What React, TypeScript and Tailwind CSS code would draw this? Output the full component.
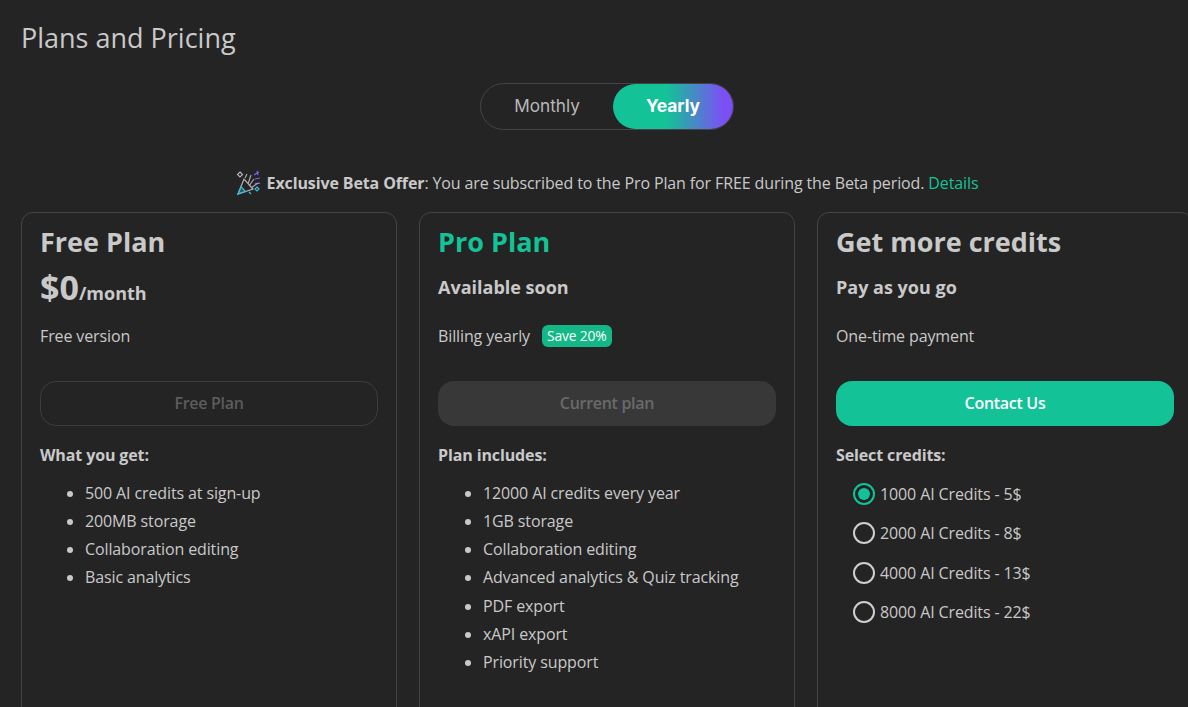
import React from 'react';

const font = { fontFamily: '"Open Sans", sans-serif' };

const ConfettiIcon = () => (
  <svg width="26" height="26" viewBox="0 0 26 26" fill="none" strokeWidth="1.2">
    <path d="M2 24 L8 9 L17 19 Z" stroke="#b4b4b4" />
    <path d="M2 24 L5 16.5 L9.5 21.5 Z" stroke="#38bdd8" fill="#38bdd8" fillOpacity="0.35" />
    <path d="M9 8 L11 4 M12 14 L15 5 M13 16 L18 9 M15 18 L22 13" stroke="#a8a8a8" />
    <path d="M4 2 L6.5 4.5 L4 7 L1.5 4.5 Z" stroke="#b4b4b4" />
    <path d="M18 5 L23 2 M19 9 L24 8" stroke="#8b5cf6" />
    <path d="M21 1 L22 5" stroke="#8b5cf6" />
    <path d="M21 17 L23 19 L21 21 L19 19 Z" stroke="#38bdd8" />
    <path d="M13 22 L15 24" stroke="#38bdd8" />
    <path d="M19 14 L24 13" stroke="#a78bfa" />
  </svg>
);

const Radio = ({ label, checked }: { label: string; checked?: boolean }) => (
  <div className="flex h-[39.3px] items-center">
    <span
      className={`flex h-[22px] w-[22px] shrink-0 items-center justify-center rounded-full border-2 ${
        checked ? 'border-[#13c296]' : 'border-[#cfcfcf]'
      }`}
    >
      {checked && <span className="h-3 w-3 rounded-full bg-[#13c296]" />}
    </span>
    <span className="ml-[5px] text-base text-[#c9c9c9]">{label}</span>
  </div>
);

const Card = ({ children }: { children: React.ReactNode }) => (
  <div className="h-[520px] w-[376px] shrink-0 rounded-xl border border-[#444444] px-[18px] pt-[9px]">
    {children}
  </div>
);

const Features = ({ items }: { items: string[] }) => (
  <ul className="mt-[10px] list-disc pl-[45px] text-base leading-[28.16px] text-[#c9c9c9] marker:text-[#c9c9c9]">
    {items.map((item) => (
      <li key={item}>{item}</li>
    ))}
  </ul>
);

const App: React.FC = () => {
  return (
    <div className="h-[707px] w-[1188px] overflow-hidden bg-[#242424] pl-[21px] tracking-[-0.12px]" style={font}>
      <h1 className="pt-[19px] text-[27px] leading-[38px] tracking-normal text-[#c9c9c9]">Plans and Pricing</h1>

      <div className="w-[1172px]">
        {/* Billing toggle */}
        <div className="mt-[26px] flex justify-center">
          <div className="flex h-[47px] w-[254px] items-center rounded-full border border-[#444444] font-['Inter',sans-serif] tracking-normal">
            <div className="flex-1 pb-[2px] text-center text-[17.2px] text-[#b8b8b8]">Monthly</div>
            <div className="flex h-[45px] w-[120px] items-center justify-center rounded-full bg-[linear-gradient(90deg,#13c296_45%,#7c4ff5_92%)] pb-[1px] text-[17.4px] font-bold text-white">
              Yearly
            </div>
          </div>
        </div>

        {/* Beta banner */}
        <div className="mt-[39px] flex h-[28px] items-center justify-center text-base text-[#c9c9c9]">
          <ConfettiIcon />
          <span className="ml-[5px]">
            <b className="font-bold">Exclusive Beta Offer</b>: You are subscribed to the Pro Plan for FREE during the
            Beta period. <span className="text-[#13c296]">Details</span>
          </span>
        </div>
      </div>

      <div className="mt-[15px] flex gap-[22px]">
        <Card>
          <h2 className="text-[27px] font-bold leading-[40px] tracking-normal text-[#c9c9c9]">Free Plan</h2>
          <div className="mt-[4px] h-[42px] font-bold leading-[42px] tracking-normal text-[#c9c9c9]">
            <span className="text-[34px]">$0</span>
            <span className="text-lg">/month</span>
          </div>
          <p className="mt-[12px] h-[32px] text-base leading-[32px] text-[#c9c9c9]">Free version</p>
          <button className="mt-[29px] h-[45px] w-full rounded-2xl border border-[#3d3d3d] pb-[2px] text-base font-semibold tracking-[-0.3px] text-[#5c5c5c]">
            Free Plan
          </button>
          <p className="mt-[15px] text-base font-bold leading-[28px] text-[#c9c9c9]">What you get:</p>
          <Features items={['500 AI credits at sign-up', '200MB storage', 'Collaboration editing', 'Basic analytics']} />
        </Card>

        <Card>
          <h2 className="text-[27px] font-bold leading-[40px] tracking-normal text-[#13c296]">Pro Plan</h2>
          <p className="mt-[4px] h-[42px] text-lg font-bold leading-[42px] tracking-normal text-[#c9c9c9]">
            Available soon
          </p>
          <div className="mt-[12px] flex h-[32px] items-center text-base text-[#c9c9c9]">
            Billing yearly
            <span className="ml-[12px] rounded-[6px] bg-[#13b886] px-[5px] py-[1px] text-[13.8px] font-normal text-white">
              Save 20%
            </span>
          </div>
          <button className="mt-[29px] h-[45px] w-full rounded-2xl bg-[#383838] pb-[2px] text-base font-semibold tracking-[-0.3px] text-[#6a6a6a]">
            Current plan
          </button>
          <p className="mt-[15px] text-base font-bold leading-[28px] text-[#c9c9c9]">Plan includes:</p>
          <Features
            items={[
              '12000 AI credits every year',
              '1GB storage',
              'Collaboration editing',
              'Advanced analytics & Quiz tracking',
              'PDF export',
              'xAPI export',
              'Priority support',
            ]}
          />
        </Card>

        <Card>
          <h2 className="text-[27px] font-bold leading-[40px] tracking-normal text-[#c9c9c9]">Get more credits</h2>
          <p className="mt-[4px] h-[42px] text-lg font-bold leading-[42px] tracking-normal text-[#c9c9c9]">
            Pay as you go
          </p>
          <p className="mt-[12px] h-[32px] text-base leading-[32px] text-[#c9c9c9]">One-time payment</p>
          <button className="mt-[29px] h-[45px] w-full rounded-2xl bg-[#13c296] pb-[2px] text-base font-semibold tracking-[-0.3px] text-white">
            Contact Us
          </button>
          <p className="mt-[15px] text-base font-bold leading-[28px] text-[#c9c9c9]">Select credits:</p>
          <div className="mt-[5.4px] pl-[17px]">
            <Radio label="1000 AI Credits - 5$" checked />
            <Radio label="2000 AI Credits - 8$" />
            <Radio label="4000 AI Credits - 13$" />
            <Radio label="8000 AI Credits - 22$" />
          </div>
        </Card>
      </div>
    </div>
  );
};

export default App;
